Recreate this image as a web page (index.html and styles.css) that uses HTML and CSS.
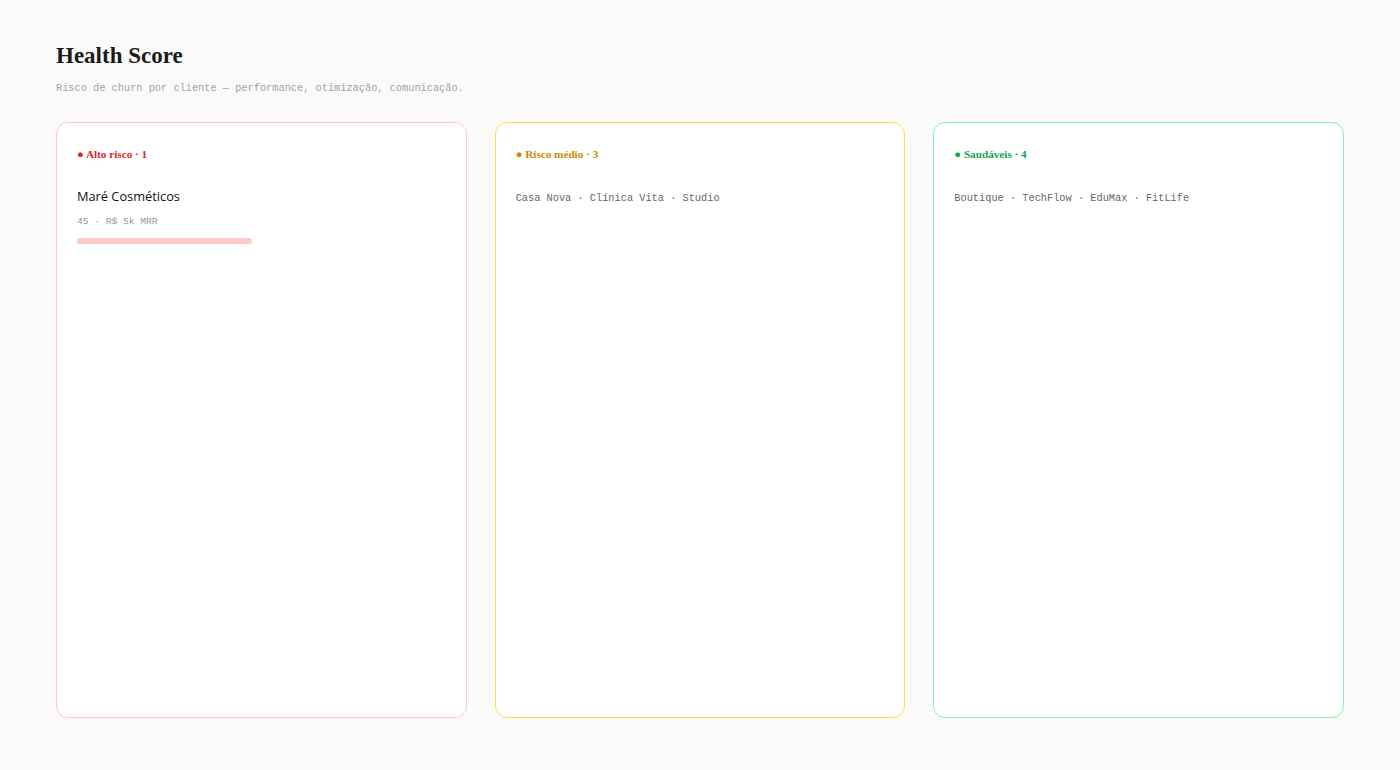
FILE: index.html
```html
<!DOCTYPE html>
<html lang="pt-BR">
<head>
    <meta charset="UTF-8">
    <meta name="viewport" content="width=device-width, initial-scale=1.0">
    <title>Health Score</title>
    <link rel="stylesheet" href="styles.css">
</head>
<body>
    <div class="page">
        <h1 class="title">Health Score</h1>
        <p class="subtitle">Risco de churn por cliente — performance, otimização, comunicação.</p>

        <div class="columns">
            <div class="column risk-high">
                <div class="column-label">● Alto risco · 1</div>
                <div class="client">
                    <div class="client-name">Maré Cosméticos</div>
                    <div class="client-meta">45 · R$ 5k MRR</div>
                    <div class="bar" style="width: 175px;"></div>
                </div>
            </div>

            <div class="column risk-mid">
                <div class="column-label">● Risco médio · 3</div>
                <div class="client-list">Casa Nova · Clínica Vita · Studio</div>
            </div>

            <div class="column risk-low">
                <div class="column-label">● Saudáveis · 4</div>
                <div class="client-list">Boutique · TechFlow · EduMax · FitLife</div>
            </div>
        </div>
    </div>
</body>
</html>
```

FILE: styles.css
```css
body {
    margin: 0;
    background: #fafafa;
    font-family: 'Liberation Serif', serif;
    color: #1a1a1a;
}

.page {
    height: 770px;
    box-sizing: border-box;
    padding: 41px 56px 52px;
    display: flex;
    flex-direction: column;
}

.title {
    margin: 0;
    font-size: 23px;
    font-weight: bold;
    line-height: 30px;
}

.subtitle {
    margin: 9px 0 0;
    font-family: 'Liberation Mono', monospace;
    font-size: 10.3px;
    color: #a3a3a3;
    line-height: 16px;
}

.columns {
    flex: 1;
    display: grid;
    grid-template-columns: 1fr 1fr 1fr;
    gap: 28px;
    margin-top: 26px;
}

.column {
    background: #fff;
    border: 1px solid #e5e5e5;
    border-radius: 12px;
    padding: 24px 20px;
}

.risk-high { border-color: #fecaca; }
.risk-mid { border-color: #fde047; }
.risk-low { border-color: #86efac; }

.column-label {
    font-size: 11.2px;
    font-weight: bold;
    line-height: 14px;
}

.risk-high .column-label { color: #dc2626; }
.risk-mid .column-label { color: #ca8a04; }
.risk-low .column-label { color: #16a34a; }

.client {
    margin-top: 26px;
}

.client-name {
    font-family: 'Open Sans', sans-serif;
    font-size: 12.8px;
    line-height: 18px;
    color: #111;
}

.client-meta {
    margin-top: 10px;
    font-family: 'Liberation Mono', monospace;
    font-size: 9.6px;
    color: #999;
    line-height: 14px;
}

.bar {
    height: 6px;
    margin-top: 9px;
    border-radius: 3px;
    background: #fecaca;
}

.client-list {
    margin-top: 29px;
    font-family: 'Liberation Mono', monospace;
    font-size: 10.3px;
    color: #666;
    line-height: 16px;
}
```
